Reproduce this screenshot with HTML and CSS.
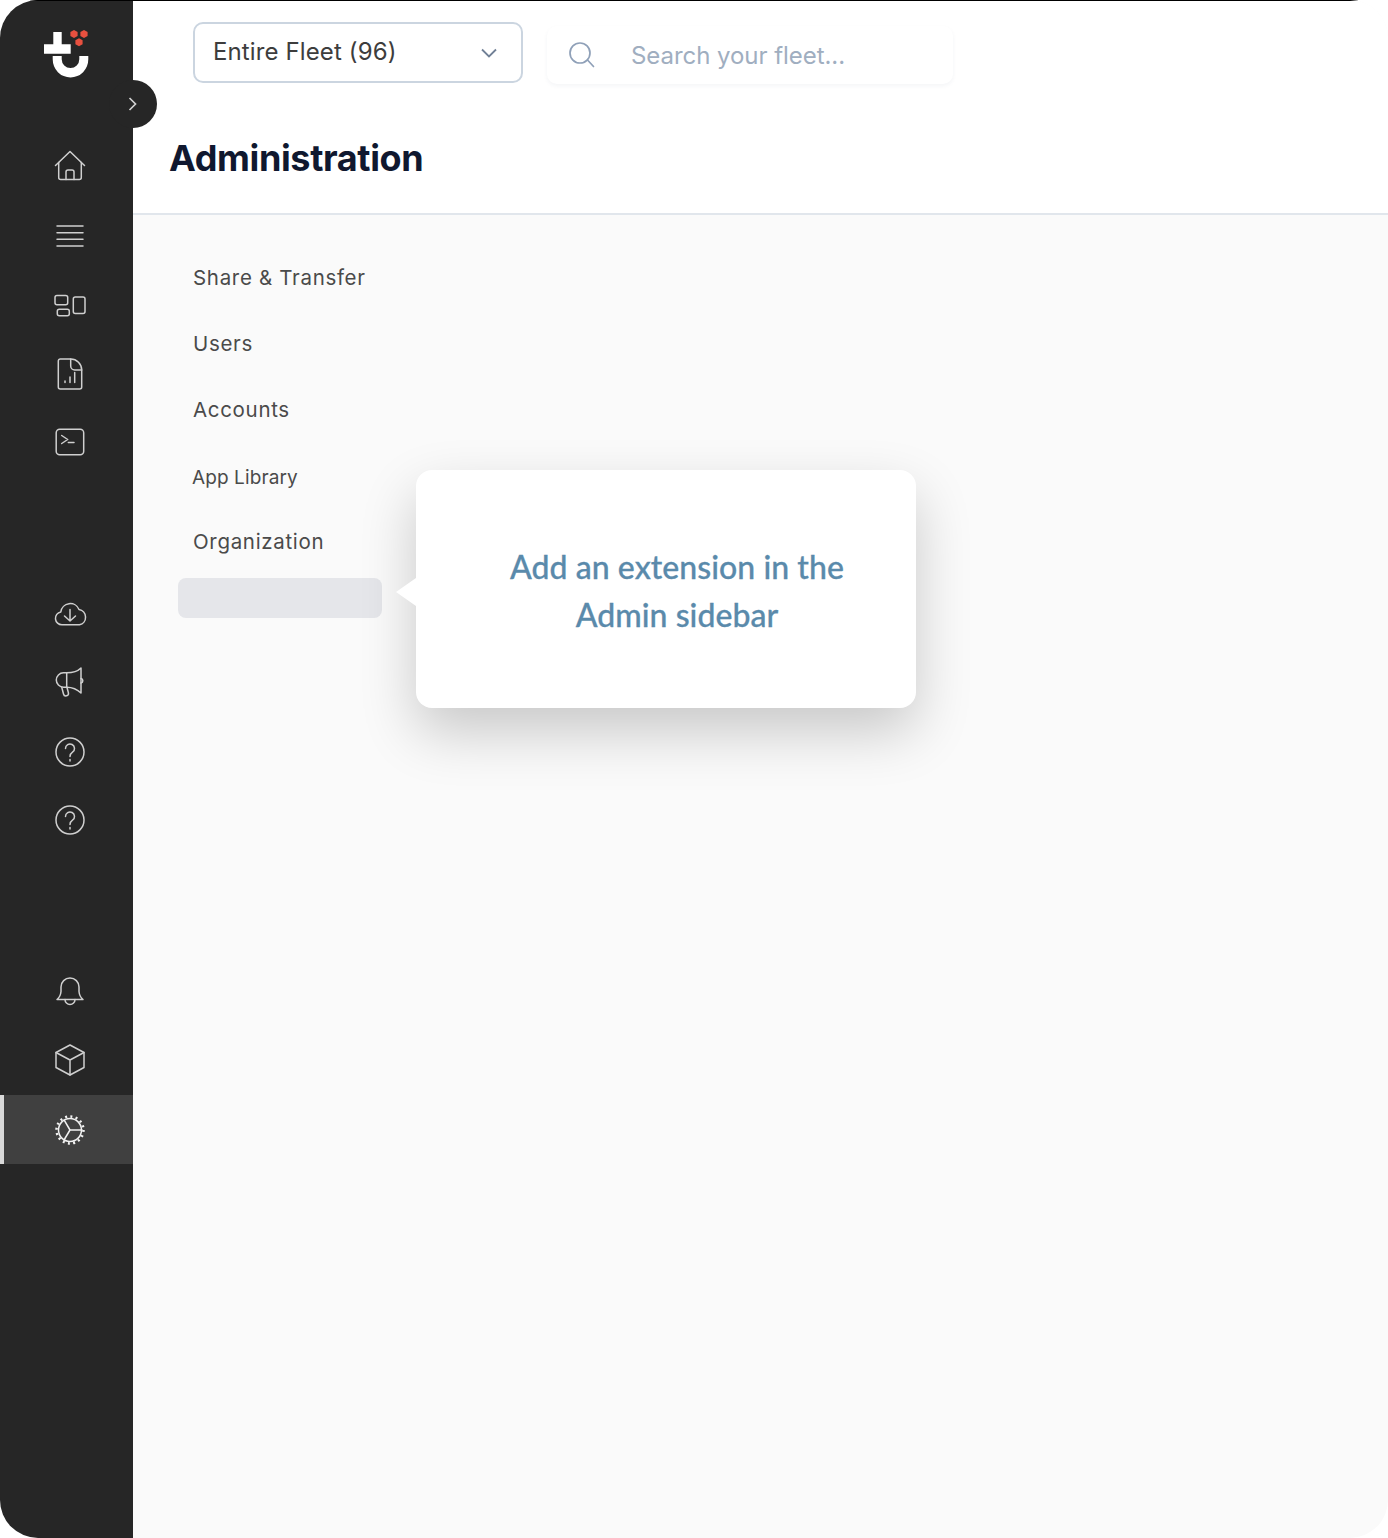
FILE: index.html
```html
<!DOCTYPE html>
<html lang="en">
<head>
<meta charset="utf-8">
<title>Administration</title>
<link rel="stylesheet" href="styles.css">
</head>
<body>
<div class="app">
  <aside class="sidebar">
    <svg class="logo" width="46" height="46" viewBox="44 32 46 46">
      <path class="logo-white" d="M53.3 32h8.4v12.3h9v9.4H44v-9.4h9.3z"/>
      <path class="logo-white" d="M52.7 56h9v3.3a8.800 8.800 0 0 0 17.600 0V56H88.300v3.300a17.800 18.200 0 0 1-35.600 0z"/>
      <path class="logo-red" d="M74 30l3.600 2v4l-3.600 2-3.600-2v-4z"/>
      <path class="logo-red" d="M84 30l3.600 2v4l-3.600 2-3.600-2v-4z"/>
      <path class="logo-red" d="M79 38.300l3.600 2v4l-3.600 2-3.600-2v-4z"/>
    </svg>
    <nav class="icon-group group-main">
      <a class="icon-row"><svg class="ico" viewBox="0 0 32 32"><path d="M1.5 16.5 16 2.500l14.500 14"/><path d="M4.700 13.500v15a2 2 0 0 0 2 2h18.600a2 2 0 0 0 2-2v-15"/><path d="M12 30.500V23a2 2 0 0 1 2-2h4a2 2 0 0 1 2 2v7.500"/></svg></a>
      <a class="icon-row"><svg class="ico" viewBox="0 0 32 32"><path d="M3 8h26M3 14.800h26M3 21.300h26M3 28h26"/></svg></a>
      <a class="icon-row"><svg class="ico" viewBox="0 0 32 32"><rect x="1" y="8.500" width="12.700" height="9.300" rx="2"/><rect x="3.300" y="22.200" width="12" height="6.600" rx="2"/><rect x="19.300" y="10" width="11.700" height="16.600" rx="2"/></svg></a>
      <a class="icon-row"><svg class="ico" viewBox="0 -0.5 32 32"><path d="M16.700 2.500H6.300a2 2 0 0 0-2 2v26a2 2 0 0 0 2 2h19.400a2 2 0 0 0 2-2v-17a11 11 0 0 0-11-11z"/><path d="M16.700 2.500v7a4 4 0 0 0 4 4h7"/><path d="M11 26v-1.500M16 26v-5.500M20.700 26v-10"/></svg></a>
      <a class="icon-row"><svg class="ico" viewBox="0 -0.5 32 32"><rect x="2.200" y="3.700" width="27.500" height="25.500" rx="3.500"/><path d="M7.700 10l6 4-6 4M14.300 17h5.700"/></svg></a>
    </nav>
    <nav class="icon-group group-tools">
      <a class="icon-row"><svg class="ico" viewBox="0 0 32 32"><path d="M8 26.800a6.500 6.500 0 0 1-1.200-12.900A9.500 9.500 0 0 1 25 11.500a7.800 7.800 0 0 1 .5 15.300z"/><path d="M16 11.500V23M10.500 18l5.500 5 5.500-5"/></svg></a>
      <a class="icon-row"><svg class="ico" viewBox="0 1 32 32"><path d="M12.700 6.800H9.500a7.200 7.200 0 0 0 0 14.400h3.200z"/><path d="M12.700 6.800C19 6.800 24 5 27 2v25c-3-3-8-5.800-14.300-5.800"/><path d="M27 12.500a2.300 2.300 0 0 1 0 4.500"/><path d="M7.800 21.500l1.700 6.500a2.500 2.500 0 0 0 4.900-1.200L13 21.500"/></svg></a>
      <a class="icon-row"><svg class="ico" viewBox="0 0 32 32"><circle cx="16" cy="16" r="14"/><path d="M11.500 12.500a4.500 4.500 0 1 1 7 3.700c-1.500 1-2.500 2-2.500 4.300M16 23.500v1.500"/></svg></a>
      <a class="icon-row"><svg class="ico" viewBox="0 1 32 32"><circle cx="16" cy="16" r="14"/><path d="M11.500 12.500a4.500 4.500 0 1 1 7 3.700c-1.500 1-2.500 2-2.500 4.300M16 23.500v1.500"/></svg></a>
    </nav>
    <nav class="icon-group group-system">
      <a class="icon-row"><svg class="ico" viewBox="0 -0.5 32 32"><path d="M3 24c2.500-2 3.700-4.500 4-8v-4.500a9 9 0 0 1 18 0V16c.3 3.500 1.500 6 4 8z"/><path d="M11 24a5 5 0 0 0 10 0"/></svg></a>
      <a class="icon-row"><svg class="ico" viewBox="0 0 32 32"><path d="M16 1l14 7.500v15L16 31 2 23.500v-15z"/><path d="M2 8.500 16 16l14-7.500M16 16v15"/></svg></a>
      <a class="icon-row is-active"><svg class="ico" viewBox="0 -1 32 32"><circle cx="16" cy="16" r="11.500"/><circle class="gear-teeth" cx="16" cy="16" r="13.500"/><path d="M16 16h12M16 16l-5.800-9.800M16 16l-6 10"/></svg></a>
    </nav>
  </aside>
  <main class="main">
    <button class="toggle" type="button" aria-label="Expand sidebar"><svg width="10" height="14" viewBox="0 0 10 14"><path d="M1.500 1l6 6-6 6"/></svg></button>
    <header class="header">
      <div class="topbar">
        <div class="fleet-select">
          <span>Entire Fleet (96)</span>
          <svg width="16" height="10" viewBox="0 0 16 10"><path d="M1 1.500l7 7 7-7"/></svg>
        </div>
        <div class="search">
          <svg width="26" height="26" viewBox="0 0 26 26"><circle cx="11" cy="11" r="10"/><path d="M18.500 18l6 6.500"/></svg>
          <span>Search your fleet...</span>
        </div>
      </div>
      <h1 class="title">Administration</h1>
    </header>
    <section class="content">
      <ul class="admin-nav">
        <li class="admin-item">Share &amp; Transfer</li>
        <li class="admin-item">Users</li>
        <li class="admin-item">Accounts</li>
        <li class="admin-item admin-item-small">App Library</li>
        <li class="admin-item">Organization</li>
        <li class="admin-slot"></li>
      </ul>
      <div class="popover">
        <p>Add an extension in the<br>Admin sidebar</p>
      </div>
    </section>
  </main>
</div>
</body>
</html>
```
FILE: styles.css
```css
* { box-sizing: border-box; }
html, body { margin: 0; padding: 0; background: #fff; }
body { width: 1388px; height: 1538px; font-family: Inter, "Liberation Sans", sans-serif; overflow: hidden; }

.app {
  position: relative;
  display: flex;
  width: 1388px;
  height: 1538px;
  border-radius: 38px;
  overflow: hidden;
}
.app::after {
  content: "";
  position: absolute;
  left: 0;
  right: 0;
  top: 0;
  height: 1px;
  background: #000;
}

.sidebar {
  flex: 0 0 133px;
  background: #262626;
  display: flex;
  flex-direction: column;
}
.logo { display: block; margin: 32px 0 0 44px; overflow: visible; flex: none; }
.logo-white { fill: #fff; }
.logo-red { fill: #e8503f; }

.icon-group { display: flex; flex-direction: column; }
.group-main { margin-top: 53px; }
.group-tools { margin-top: 104px; }
.group-system { margin-top: 101px; }

.icon-row {
  height: 69px;
  display: flex;
  align-items: center;
  justify-content: center;
  padding: 0 0 1px 7px;
}
.icon-row.is-active {
  background: #404040;
  border-left: 4px solid #d9d9d9;
  padding-left: 3px;
}
.ico {
  width: 32px;
  height: 32px;
  overflow: visible;
  fill: none;
  stroke: #cfcfcf;
  stroke-width: 1.5;
  stroke-linecap: round;
  stroke-linejoin: round;
}
.is-active .ico { stroke: #f2f2f2; }
.gear-teeth { stroke-width: 2.500; stroke-dasharray: 2 3.300; stroke-linecap: butt; }

.main { flex: 1; display: flex; flex-direction: column; position: relative; background: #fafafa; min-width: 0; }

.toggle {
  position: absolute;
  left: -24px;
  top: 80px;
  width: 48px;
  height: 48px;
  padding: 0;
  border: 0;
  border-radius: 50%;
  background: #262626;
  display: flex;
  align-items: center;
  justify-content: center;
}
.toggle svg { fill: none; stroke: #d0d0d0; stroke-width: 1.700; }

.header {
  background: #fff;
  height: 215px;
  border-bottom: 2px solid #e1e6ec;
  flex: none;
}
.topbar { display: flex; align-items: flex-start; gap: 24px; padding: 22px 0 0 60px; }
.fleet-select {
  width: 330px;
  height: 61px;
  display: flex;
  align-items: center;
  justify-content: space-between;
  padding: 0 24px 0 18px;
  background: #fff;
  border: 2px solid #cbd5e0;
  border-radius: 10px;
  font-size: 24px;
  letter-spacing: 0.12px;
  color: #3d3d3d;
}
.fleet-select span { position: relative; bottom: 1px; }
.fleet-select svg { fill: none; stroke: #718096; stroke-width: 1.800; }
.search {
  width: 406px;
  height: 58px;
  margin-top: 4px;
  display: flex;
  align-items: center;
  gap: 36px;
  padding-left: 22px;
  background: #fff;
  border-radius: 10px;
  box-shadow: 0 2px 4px rgba(30, 50, 90, 0.05);
  font-size: 24px;
  letter-spacing: -0.05px;
  color: #a0aec0;
}
.search svg { fill: none; stroke: #8fa0b8; stroke-width: 1.700; stroke-linecap: round; flex: none; }
.title {
  margin: 52px 0 0 36px;
  font-size: 36px;
  line-height: 44px;
  font-weight: 700;
  letter-spacing: -0.36px;
  color: #10182f;
}

.content { flex: 1; position: relative; }
.admin-nav { list-style: none; margin: 0; padding: 30px 0 0 60px; }
.admin-item {
  height: 66px;
  display: flex;
  align-items: center;
  padding-bottom: 2px;
  font-size: 20.5px;
  letter-spacing: 0.68px;
  color: #4a4a4a;
}
.admin-item-small { padding-bottom: 0; font-size: 19px; margin-left: -1px; position: relative; top: 1px; letter-spacing: 0.1px; }
.admin-slot {
  width: 204px;
  height: 40px;
  margin: 3px 0 0 -15px;
  background: #e5e6ea;
  border-radius: 8px;
}

.popover {
  position: absolute;
  left: 283px;
  top: 255px;
  width: 500px;
  height: 238px;
  padding: 73px 0 0 22px;
  background: #fff;
  border-radius: 16px;
  box-shadow: 0 24px 56px rgba(0, 0, 0, 0.2);
  text-align: center;
}
.popover::before {
  content: "";
  position: absolute;
  left: -20px;
  top: 108px;
  width: 20px;
  height: 28px;
  background: #fff;
  clip-path: polygon(100% 0, 0 50%, 100% 100%);
}
.popover p {
  margin: 0;
  font-family: "Lato Medium", Lato, "Noto Sans", sans-serif;
  font-size: 32px;
  line-height: 48px;
  letter-spacing: 0.05px;
  -webkit-text-stroke: 0.3px #5a8aab;
  color: #5a8aab;
}
```
